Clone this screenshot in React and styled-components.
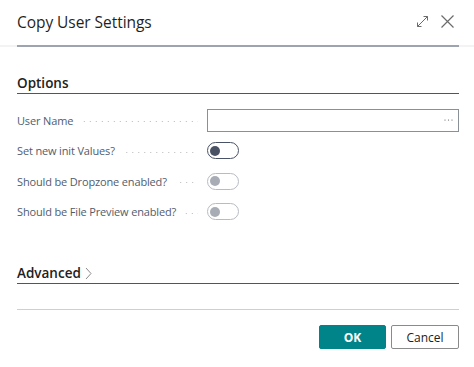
import React from "react";
import styled, { createGlobalStyle } from "styled-components";

const Global = createGlobalStyle`
  html, body { margin: 0; padding: 0; background: #ffffff; }
  body { font-family: "Segoe UI", "Open Sans", "Noto Sans", sans-serif; color: #212121; }
  * { box-sizing: border-box; }
`;

const Dialog = styled.div`
  width: 474px;
  height: 367px;
  display: flex;
  flex-direction: column;
  background: #fff;
`;

const Header = styled.div`
  height: 45px;
  display: flex;
  align-items: center;
  padding: 0 20px 2px 17px;
`;

const Title = styled.h1`
  margin: 0;
  flex: 1;
  font-size: 15.5px;
  font-weight: 500;
  color: #1f1f1f;
  letter-spacing: -0.05px;
`;

const HeaderIcons = styled.div`
  display: flex;
  align-items: center;
  gap: 12px;
`;

const IconButton = styled.span`
  display: inline-flex;
  width: 13px;
  height: 13px;
  color: #6b6b6b;
`;

const HeaderRule = styled.div`
  height: 2px;
  background: #f3f3f4;
  padding: 0 15px 0 17px;
  &::after {
    content: "";
    display: block;
    height: 2px;
    background: #9ea3b0;
  }
`;

const Body = styled.div`
  flex: 1;
  padding: 0 15px 0 17px;
  display: flex;
  flex-direction: column;
`;

const SectionHeading = styled.div`
  display: flex;
  align-items: center;
  gap: 4px;
  height: 21px;
  margin-top: ${(p) => p.$top}px;
  border-bottom: 1px solid #4c5667;
  font-size: 13.5px;
  font-weight: 600;
  color: #212121;
  padding-bottom: 1px;
`;

const Fields = styled.div`
  display: flex;
  flex-direction: column;
  margin-top: 11px;
`;

const Row = styled.div`
  display: grid;
  grid-template-columns: 181px 1fr;
  column-gap: 9px;
  align-items: center;
  height: 30.5px;
`;

const LabelCell = styled.div`
  display: flex;
  align-items: center;
  gap: 9px;
  min-width: 0;
`;

const Label = styled.span`
  font-size: 11px;
  letter-spacing: -0.15px;
  color: #505c6d;
  white-space: nowrap;
`;

const Leader = styled.span`
  flex: 1;
  height: 1px;
  margin-top: 3px;
  background-image: linear-gradient(to right, #b8b8b8 1px, transparent 1px);
  background-size: 6px 1px;
  background-repeat: repeat-x;
  background-position: right center;
`;

const TextInput = styled.div`
  height: 23px;
  border: 1px solid #8a909a;
  display: flex;
  align-items: center;
  justify-content: flex-end;
  padding-right: 5px;
`;

const Toggle = styled.span`
  width: 32px;
  height: 17px;
  border-radius: 9px;
  border: 1.5px solid ${(p) => (p.$disabled ? "#b7bbc3" : "#4a5366")};
  display: flex;
  align-items: center;
  padding-left: 2px;
  &::before {
    content: "";
    width: 10px;
    height: 10px;
    border-radius: 50%;
    background: ${(p) => (p.$disabled ? "#a8acb5" : "#4a5366")};
  }
`;

const Chevron = styled.svg`
  width: 7px;
  height: 13px;
  margin-top: 1px;
`;

const Footer = styled.div`
  margin-top: auto;
  padding: 0 15px 18px 17px;
`;

const FooterRule = styled.div`
  height: 1px;
  background: #cfcfcf;
`;

const Buttons = styled.div`
  display: flex;
  justify-content: flex-end;
  gap: 5px;
  margin-top: 15px;
`;

const Button = styled.button`
  height: 24px;
  width: ${(p) => p.$w}px;
  border-radius: 2px;
  font-family: inherit;
  font-size: 12px;
  cursor: pointer;
  padding: 0;
  border: 1px solid ${(p) => (p.$primary ? "#008489" : "#8a8a8a")};
  background: ${(p) => (p.$primary ? "#008489" : "#ffffff")};
  color: ${(p) => (p.$primary ? "#ffffff" : "#212121")};
  font-weight: ${(p) => (p.$primary ? 700 : 400)};
`;

const fields = [
  { label: "User Name", kind: "input" },
  { label: "Set new init Values?", kind: "toggle" },
  { label: "Should be Dropzone enabled?", kind: "toggle", disabled: true },
  { label: "Should be File Preview enabled?", kind: "toggle", disabled: true },
];

export default function App() {
  return (
    <>
      <Global />
      <Dialog>
        <Header>
          <Title>Copy User Settings</Title>
          <HeaderIcons>
            <IconButton>
              <svg width="13" height="13" viewBox="0 0 13 13" fill="none" stroke="currentColor" strokeWidth="1">
                <path d="M1.5 11.5 L11.5 1.5" />
                <path d="M7.5 1.5 H11.5 V5.5" />
                <path d="M1.5 7.5 V11.5 H5.5" />
              </svg>
            </IconButton>
            <IconButton>
              <svg width="13" height="13" viewBox="0 0 13 13" fill="none" stroke="currentColor" strokeWidth="1.2">
                <path d="M0.5 0.5 L12.5 12.5 M12.5 0.5 L0.5 12.5" />
              </svg>
            </IconButton>
          </HeaderIcons>
        </Header>
        <HeaderRule />
        <Body>
          <SectionHeading $top={26}>Options</SectionHeading>
          <Fields>
            {fields.map((f) => (
              <Row key={f.label}>
                <LabelCell>
                  <Label>{f.label}</Label>
                  <Leader />
                </LabelCell>
                {f.kind === "input" ? (
                  <TextInput>
                    <svg width="9" height="2" viewBox="0 0 9 2">
                      <circle cx="1" cy="1" r="0.6" fill="#555" />
                      <circle cx="4.5" cy="1" r="0.6" fill="#555" />
                      <circle cx="8" cy="1" r="0.6" fill="#555" />
                    </svg>
                  </TextInput>
                ) : (
                  <Toggle $disabled={f.disabled} />
                )}
              </Row>
            ))}
          </Fields>
          <SectionHeading $top={36}>
            Advanced
            <Chevron viewBox="0 0 7 13" fill="none" stroke="#8a8a8a" strokeWidth="1">
              <path d="M1 1 L6 6.5 L1 12" />
            </Chevron>
          </SectionHeading>
        </Body>
        <Footer>
          <FooterRule />
          <Buttons>
            <Button $primary $w={67}>OK</Button>
            <Button $w={68}>Cancel</Button>
          </Buttons>
        </Footer>
      </Dialog>
    </>
  );
}
